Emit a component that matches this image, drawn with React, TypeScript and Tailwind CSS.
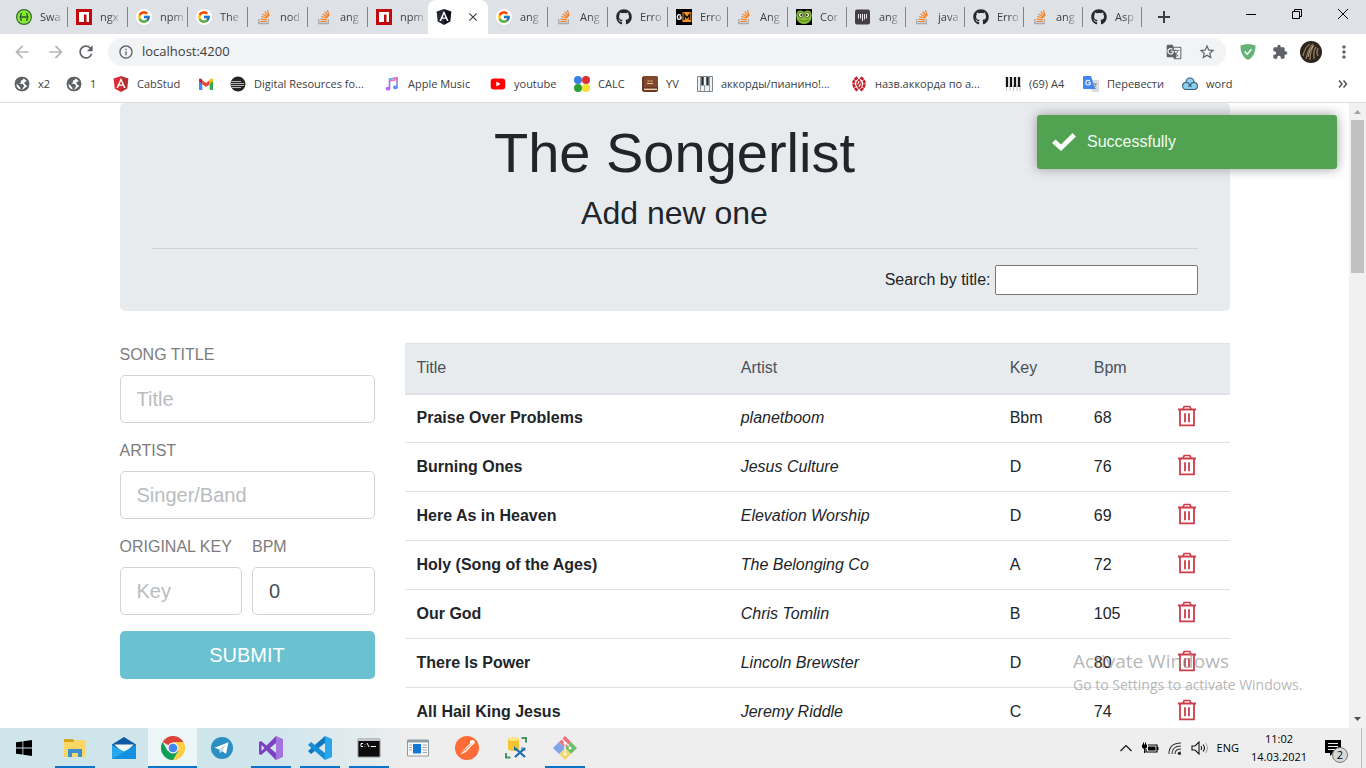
import React from 'react';
import { FcGoogle } from 'react-icons/fc';
import { FaGithub } from 'react-icons/fa';
import {
  MdArrowBack,
  MdArrowForward,
  MdClose,
  MdExtension,
  MdGTranslate,
  MdInfoOutline,
  MdMoreVert,
  MdRefresh,
  MdStarBorder,
} from 'react-icons/md';

/* ---------- Favicons ---------- */

const Swagger = () => (
  <svg viewBox="0 0 16 16" className="size-4">
    <circle cx="8" cy="8" r="7.4" fill="#85ea2d" stroke="#3a6b3c" strokeWidth="1.2" />
    <path d="M6 4.6c-1.600 0-1 1.200-1.200 2.400Q4.700 8 3.600 8q1.100 0 1.200 1c.2 1.200-.4 2.400 1.200 2.400M10 4.600c1.600 0 1 1.200 1.200 2.400q.1 1 1.200 1-1.100 0-1.200 1c-.2 1.200.4 2.400-1.200 2.400M5.500 8h5" fill="none" stroke="#2c4f2e" strokeWidth="1.300" />
  </svg>
);

const Npm = () => (
  <svg viewBox="0 0 16 16" className="size-4">
    <path fill="#c00a0c" d="M0 0h16v16H0z" />
    <path fill="#fff" d="M3 3h10v10h-2.500V5.500H8V13H3z" />
  </svg>
);

const Google = () => (
  <span className="flex size-4 items-center justify-center rounded-full bg-white">
    <FcGoogle className="size-3.5" />
  </span>
);

const Stack = () => (
  <svg viewBox="0 0 16 16" className="size-4">
    <path d="M2.700 10v4.500h9.600V10" fill="none" stroke="#a7a9ac" strokeWidth="1.300" />
    <path d="M4.300 12.500h6.300M4.500 10.100l6.200.7M5.200 7.500l6 1.700M6.600 4.900l5.300 3.300M8.700 2.700l3.900 4.800M11.400 1.200l1.800 5.500" stroke="#f48024" strokeWidth="1.200" />
  </svg>
);

const Github = () => <FaGithub className="size-4 text-[#24292e]" />;

const AngularShape = ({ left, right }: { left: string; right: string }) => (
  <svg viewBox="0 0 16 16" className="size-4">
    <path fill={left} d="M8 0 .6 2.600l1.100 9.800L8 16z" />
    <path fill={right} d="m8 0 7.400 2.600-1.100 9.800L8 16z" />
    <path fill="#fff" fillRule="evenodd" d="M8 1.800 3.400 12.100h1.700l.9-2.300h4l.9 2.300h1.700zM8 5l1.400 3.400H6.600z" />
  </svg>
);
const AngularDark = () => <AngularShape left="#252b36" right="#0d1119" />;
const AngularRed = () => <AngularShape left="#dd2c31" right="#b52e31" />;

const Gm = () => (
  <svg viewBox="0 0 16 16" className="size-4">
    <path fill="#000" d="M0 0h16v16H0z" />
    <path fill="#f7931e" d="M6.500 3h8.800v10H6.500z" />
    <path d="M5 6.300Q1.300 4.500 1.300 8T5 9.700V8H3.500" fill="none" stroke="#fff" strokeWidth="1.300" />
    <path d="M8.200 11V5.500l2.700 3.500 2.700-3.500V11" fill="none" stroke="#111" strokeWidth="1.500" />
  </svg>
);

const Frog = () => (
  <svg viewBox="0 0 16 16" className="size-4">
    <path fill="#000" d="M0 0h16v16H0z" />
    <path fill="#86bd35" d="M.5 5Q1 1.500 4.500 1.500 7 1.500 8 3q1-1.500 3.500-1.500Q15 1.500 15.500 5q.8 7-3.500 9-4 2-8 0Q-.3 12 .5 5" />
    <circle cx="4.800" cy="6" r="2.500" fill="#eef6c8" stroke="#29430d" strokeWidth=".8" />
    <circle cx="11.200" cy="6" r="2.500" fill="#eef6c8" stroke="#29430d" strokeWidth=".8" />
    <circle cx="5.300" cy="6" r="1" fill="#15240a" />
    <circle cx="10.700" cy="6" r="1" fill="#15240a" />
    <path d="M3 11q5 2.600 10 0" stroke="#558821" fill="none" />
  </svg>
);

const Bars = () => (
  <svg viewBox="0 0 16 16" className="size-4">
    <rect y=".5" width="15" height="15" rx="2" fill="#453f49" />
    <path d="M3.500 5v4.500M5.500 5v4.500M7.500 5v7M9.500 5v5.500M11.500 5v4.500" stroke="#fff" strokeWidth=".9" />
  </svg>
);

const Globe = () => (
  <svg viewBox="0 0 16 16" className="size-4">
    <circle cx="8" cy="8" r="7.300" fill="#5f6368" />
    <path fill="#fff" d="M9.500 2.200 8.800 4 7 4.600v1.600L5.200 7.500 8.700 8l1.500 1.700-1 1.800L8 14q-2-.5-1.800-2.500L4 9 2.200 7.700Q2.200 11 4.500 13L8 14.300 13.400 10l-1.700-1-1.600-2 1.500-1.500L13 5z" />
    <circle cx="8" cy="8" r="6.600" fill="none" stroke="#5f6368" strokeWidth="1.500" />
  </svg>
);

const Gmail = () => (
  <svg viewBox="0 0 16 16" className="size-4">
    <path fill="#4285f4" d="M1 3.500 4.300 6v8H1.800Q1 14 1 13z" />
    <path fill="#34a853" d="M15 3.500 11.700 6v8h2.500q.8 0 .8-1z" />
    <path fill="#ea4335" d="M4.300 4.300 8 7.100l3.700-2.800v4L8 11 4.300 8.300z" />
    <path fill="#c5221f" d="M1 5V4q.2-2 2-1.200l1.300 1v4.300z" />
    <path fill="#fbbc04" d="M15 5V4q-.2-2-2-1.200l-1.300 1v4.300z" />
  </svg>
);

const Disc = () => (
  <svg viewBox="0 0 16 16" className="size-4">
    <circle cx="8" cy="8" r="7.500" fill="#252525" />
    <path d="M1.500 5.500H11M.5 7.500H14M.5 9.500H14M1.500 11.500H11" stroke="#b5b5b5" strokeWidth="1" />
  </svg>
);

const Music = () => (
  <svg viewBox="0 0 16 16" className="size-4">
    <defs>
      <linearGradient id="note" x1="0" x2="1" y1="1" y2="0">
        <stop stopColor="#b665f3" />
        <stop offset=".5" stopColor="#47a8ef" />
        <stop offset="1" stopColor="#f265a8" />
      </linearGradient>
    </defs>
    <path d="M5.500 12V3.200L13 1.700v9" fill="none" stroke="url(#note)" strokeWidth="1.700" />
    <path d="M5.500 5 13 3.500" stroke="#ed72bc" strokeWidth="1.700" />
    <ellipse cx="4" cy="12.700" rx="2.400" ry="1.900" fill="#b56bf5" />
    <ellipse cx="11.400" cy="11.300" rx="2.400" ry="1.900" fill="#5b8df2" />
  </svg>
);

const Youtube = () => (
  <svg viewBox="0 0 16 16" className="size-4">
    <rect x=".7" y="2.500" width="14.600" height="11" rx="3" fill="#f00" />
    <path fill="#fff" d="m6.300 5.500 4.300 2.500-4.300 2.500z" />
  </svg>
);

const Dots = () => (
  <svg viewBox="0 0 16 16" className="size-4">
    <circle cx="4" cy="4" r="4" fill="#3a80e8" />
    <circle cx="12" cy="4" r="4" fill="#e02f34" />
    <circle cx="4" cy="12" r="4" fill="#26a336" />
    <circle cx="12" cy="12" r="4" fill="#f4df30" />
  </svg>
);

const Book = () => (
  <svg viewBox="0 0 16 16" className="size-4">
    <rect width="16" height="16" rx="2.500" fill="#6d3420" />
    <path fill="#834730" d="M3 0h11q2 0 2 2v9H2V1z" />
    <path d="M2 13.300h13" stroke="#ead9b9" strokeWidth="1.400" />
    <path d="M5.500 5h2m1 0h2M5 7.500h6" stroke="#e8c98a" strokeWidth="1.200" />
  </svg>
);

const Piano = () => (
  <svg viewBox="0 0 16 16" className="size-4">
    <path fill="#eef0f1" stroke="#7c868c" d="M.5.5h15v15H.5z" />
    <path d="M3.500 1v14M7.500 9v6M12.500 1v14" stroke="#8f989e" />
    <path d="M5.500 1v8.500M10.500 1v8.500" stroke="#262b2e" strokeWidth="2.400" />
  </svg>
);

const Emblem = () => (
  <svg viewBox="0 0 16 16" className="size-4">
    <path d="M6.500 1.500Q2 4 2.500 8t4 6.500M9.500 1.500Q14 4 13.500 8t-4 6.500" fill="none" stroke="#c61c27" strokeWidth="2.600" strokeDasharray="3.500 .6" />
    <path d="M8 3.500Q5.500 6 5.800 8.500L8 12.500q2.700-2 2.200-5z" fill="none" stroke="#c61c27" strokeWidth="1.200" />
    <path d="m7 10 2-4" stroke="#c61c27" strokeWidth="1.300" />
  </svg>
);

const Keys = () => (
  <svg viewBox="0 0 16 16" className="size-4">
    <path d="M1.500 9v6M5 9v6M8.500 9v6M12 9v6M15.200 9v6" stroke="#b3b3b3" strokeWidth=".8" />
    <path d="M2 1v10M6 1v10M10 1v10M14 1v10" stroke="#151515" strokeWidth="2.300" />
  </svg>
);

const Translate = () => (
  <svg viewBox="0 0 16 16" className="size-4">
    <path fill="#dadce0" d="M6 4h9q1 0 1 1v11H9z" />
    <path d="M9 8h5m-2.500-1v1m-2 5q3-1.500 3.300-5m-2.600 1.500q1 2.500 3 3.500" fill="none" stroke="#80868b" strokeWidth=".9" />
    <path fill="#4285f4" d="M1 0h7l4 13H1q-1 0-1-1V1q0-1 1-1z" />
    <path d="M7 5Q4 3 3 6t2 3 2.300-2.300H5.200" fill="none" stroke="#fff" strokeWidth="1.100" />
  </svg>
);

const Clouds = () => (
  <svg viewBox="0 0 16 16" className="size-4">
    <g fill="#8bd0f0" stroke="#345a75" strokeWidth="1.100">
      <circle cx="8" cy="6" r="4" />
      <circle cx="4.100" cy="10" r="3.500" />
      <circle cx="11.900" cy="10" r="3.500" />
    </g>
    <path d="M4.500 10h7v2.900h-7z" fill="#8bd0f0" />
    <path d="M4 13.500h8M8 9l-1.500 2M8 9l1.500 2" stroke="#345a75" strokeWidth="1.100" />
  </svg>
);

const Shield = () => (
  <svg viewBox="0 0 16 16" className="size-4">
    <path fill="#67b279" d="M8 0q4 0 7.500 1.500Q16 12 8 16 0 12 .5 1.500 4 0 8 0" />
    <path d="m4.700 7.500 2.500 2.700 4.300-4.900" stroke="#fff" strokeWidth="1.400" fill="none" />
  </svg>
);

const Avatar = () => (
  <svg viewBox="0 0 22 22" className="size-[22px]">
    <circle cx="11" cy="11" r="11" fill="#2e241c" />
    <path d="M3 15Q5 6 10 3M6 18Q8 8 13 3M10 19q0-9 4-15M14 18q-1-8 2-12M18 15q-2-4 0-8" stroke="#8f7c60" fill="none" strokeWidth="1.300" />
    <path d="M8 16q1-7 5-11" stroke="#d4c5a6" fill="none" strokeWidth=".8" />
  </svg>
);

/* ---------- Taskbar icons ---------- */

const WinLogo = () => (
  <svg viewBox="0 0 16 16" className="size-4">
    <path d="m0 2.300 6.500-.9v6.200H0zM7.300 1.300 16 0v7.600H7.300zM0 8.400h6.500v6.200L0 13.700zM7.300 8.400H16V16l-8.700-1.200z" />
  </svg>
);

const Explorer = () => (
  <svg viewBox="0 0 24 24" className="size-6">
    <path fill="#d9a520" d="M1 3h9l2 3H1z" />
    <path fill="#fdd766" d="M1 6h10l1-2h10.500v17H1z" />
    <path fill="#3e8fd0" d="M5 13h14v8h-4v-4H9v4H5z" />
  </svg>
);

const Mail = () => (
  <svg viewBox="0 0 24 24" className="size-6">
    <path fill="#0c59a4" d="M0 8.500 12 1l12 7.500v4H0z" />
    <path fill="#f3f7fa" d="M2 8.500h20L13 16h-2z" />
    <path fill="#28a8ea" d="m0 9 12 6.500L24 9v14H0z" />
    <path fill="#1490df" d="M0 23 24 9v14z" />
  </svg>
);

const Chrome = () => (
  <svg viewBox="0 0 24 24" className="size-6">
    <path fill="#db4437" d="M12 12 1.600 6a12 12 0 0 1 20.800 0z" />
    <path fill="#ffcd40" d="M12 6h10.400A12 12 0 0 1 12 24l5-9z" />
    <path fill="#0f9d58" d="M1.600 6A12 12 0 0 0 12 24l5.200-9L12 12 6.800 15z" />
    <circle cx="12" cy="12" r="5.500" fill="#f1f1f1" />
    <circle cx="12" cy="12" r="4.300" fill="#4285f4" />
  </svg>
);

const Telegram = () => (
  <svg viewBox="0 0 24 24" className="size-6">
    <circle cx="12" cy="12" r="11" fill="#2c8fc1" />
    <path fill="#fff" d="M4.500 11.800 18.500 6.200 16 18l-4-3-2 2-.6-3.500z" />
    <path fill="#b7d8eb" d="m9.400 13.500 7-5.500L12 15l-2 2z" />
  </svg>
);

const VisualStudio = () => (
  <svg viewBox="0 0 24 24" className="size-6">
    <path fill="#a374df" d="m17 0 7 3v18l-7 3z" />
    <path fill="#7c42bd" d="M17 0v7l-6 5 6 5v7L7.500 14.500 2 19l-2-1V6l2-1 5.500 4.500z" />
    <path fill="#d5e7ee" d="m2.500 9 3 3-3 3z" />
  </svg>
);

const VsCode = () => (
  <svg viewBox="0 0 24 24" className="size-6">
    <path fill="#0f78bd" d="M17 0 0 15l3 3L17 7z" />
    <path fill="#148fd5" d="M17 24 0 9l3-3 14 11z" />
    <path fill="#27a6ec" d="m17 0 7 3v18l-7 3z" />
  </svg>
);

const Terminal = () => (
  <svg viewBox="0 0 24 24" className="size-6">
    <path fill="#0b0b0b" stroke="#939393" d="M1 3h22v18H1z" />
    <path fill="#bfc6ca" d="M1 3h22v2H1z" />
    <path d="M6 7.500H4v3h2M8 8v.500M8 10v.500M10 7l2 4M14 10.500h5" stroke="#fff" fill="none" />
  </svg>
);

const Reader = () => (
  <svg viewBox="0 0 24 24" className="size-6">
    <path fill="#fafafa" stroke="#919a9e" d="M1.500 4h21v16h-21z" />
    <path fill="#8fa0a8" d="M2 4h20v2.500H2z" />
    <path fill="#1478d4" d="M7 8h8v9.500H7z" />
    <path d="M3 9h3M3 11.500h3M3 14h3M16.500 9H21M16.500 11.500H21M16.500 14H21M16.500 16.500H21" stroke="#a8a8a8" />
  </svg>
);

const Postman = () => (
  <svg viewBox="0 0 24 24" className="size-6">
    <circle cx="12" cy="12" r="12" fill="#ff6c37" />
    <path fill="#fff" d="m5.500 18.500 3.500-5L15.500 7l2 2-6.500 7z" />
    <circle cx="17.300" cy="6.500" r="2.400" fill="#fff" />
    <path d="m7.500 16.500 9-8.500M9.500 13l2 2" stroke="#ff6c37" strokeWidth=".8" />
  </svg>
);

const SqlTool = () => (
  <svg viewBox="0 0 24 24" className="size-6">
    <path fill="#f4c531" d="M4 3v10.500q6 3 11 0V3z" />
    <ellipse cx="9.500" cy="3" rx="5.500" ry="2" fill="#ffe385" />
    <path d="M17.500 2H22v4.500M2 17v4.500h4.500" fill="none" stroke="#44965a" strokeWidth="2" />
    <path d="m11 12 10 9m0-9-10 9" stroke="#176dac" strokeWidth="2.200" />
    <path d="M10.500 10.500v3.500H14M18 11v3h3.500" stroke="#176dac" fill="none" />
  </svg>
);

const GitTool = () => (
  <svg viewBox="0 0 24 24" className="size-6">
    <path fill="#ef6f72" d="m12 0 6 6-6 6-6-6z" />
    <path fill="#6fbf69" d="m18 6 6 6-6 6-6-6z" />
    <path fill="#f4d768" d="m12 12 6 6-6 6-6-6z" />
    <path fill="#7fa5e8" d="m6 6 6 6-6 6-6-6z" />
    <path d="m8 2 8 8M12 6v12" stroke="#f5f5f5" strokeWidth="1.300" />
    <circle cx="12" cy="7" r="1.500" fill="#fff" />
    <circle cx="17" cy="12" r="1.500" fill="#fff" />
    <circle cx="12" cy="18" r="1.500" fill="#fff" />
  </svg>
);

const Trash = () => (
  <svg viewBox="0 0 18 22" className="h-[22px] w-[18px]" fill="none" stroke="#cd3d4b">
    <path d="M0 4.500h18M2 5v15.300h14V5" strokeWidth="1.800" />
    <path d="M5 4.200 6.200 1.500h5.600L13 4.200" strokeWidth="1.700" />
    <path d="M7 8.300v8.900M11 8.300v8.900" strokeWidth="1.800" />
  </svg>
);

/* ---------- Data ---------- */

type Icon = () => React.JSX.Element;

const tabs: { icon: Icon; text: string; active?: boolean; narrow?: boolean }[] = [
  { icon: Swagger, text: 'Swa' },
  { icon: Npm, text: 'ngx' },
  { icon: Google, text: 'npm' },
  { icon: Google, text: 'The' },
  { icon: Stack, text: 'nod' },
  { icon: Stack, text: 'ang' },
  { icon: Npm, text: 'npm' },
  { icon: AngularDark, text: '', active: true },
  { icon: Google, text: 'ang' },
  { icon: Stack, text: 'Ang' },
  { icon: Github, text: 'Erro' },
  { icon: Gm, text: 'Erro' },
  { icon: Stack, text: 'Ang' },
  { icon: Frog, text: 'Cor', narrow: true },
  { icon: Bars, text: 'ang', narrow: true },
  { icon: Stack, text: 'java', narrow: true },
  { icon: Github, text: 'Erro', narrow: true },
  { icon: Stack, text: 'ang', narrow: true },
  { icon: Github, text: 'Asp', narrow: true },
];

const bookmarks: { icon: Icon; text: string; width: string }[] = [
  { icon: Globe, text: 'x2', width: 'w-[52px]' },
  { icon: Globe, text: '1', width: 'w-[47px]' },
  { icon: AngularRed, text: 'CabStud', width: 'w-[85px]' },
  { icon: Gmail, text: '', width: 'w-[32px]' },
  { icon: Disc, text: 'Digital Resources fo...', width: 'w-[154px]' },
  { icon: Music, text: 'Apple Music', width: 'w-[106px]' },
  { icon: Youtube, text: 'youtube', width: 'w-[84px]' },
  { icon: Dots, text: 'CALC', width: 'w-[68px]' },
  { icon: Book, text: 'YV', width: 'w-[55px]' },
  { icon: Piano, text: 'аккорды/пианино!...', width: 'w-[154px]' },
  { icon: Emblem, text: 'назв.аккорда по а...', width: 'w-[154px]' },
  { icon: Keys, text: '(69) A4', width: 'w-[78px]' },
  { icon: Translate, text: 'Перевести', width: 'w-[99px]' },
  { icon: Clouds, text: 'word', width: 'w-[60px]' },
];

const songs = [
  ['Praise Over Problems', 'planetboom', 'Bbm', '68'],
  ['Burning Ones', 'Jesus Culture', 'D', '76'],
  ['Here As in Heaven', 'Elevation Worship', 'D', '69'],
  ['Holy (Song of the Ages)', 'The Belonging Co', 'A', '72'],
  ['Our God', 'Chris Tomlin', 'B', '105'],
  ['There Is Power', 'Lincoln Brewster', 'D', '80'],
  ['All Hail King Jesus', 'Jeremy Riddle', 'C', '74'],
];

const apps: { name: string; icon: Icon; running?: boolean; active?: boolean }[] = [
  { name: 'File Explorer', icon: Explorer, running: true },
  { name: 'Mail', icon: Mail },
  { name: 'Chrome', icon: Chrome, active: true },
  { name: 'Telegram', icon: Telegram },
  { name: 'Visual Studio', icon: VisualStudio, running: true },
  { name: 'Visual Studio Code', icon: VsCode, running: true },
  { name: 'Command Prompt', icon: Terminal, running: true },
  { name: 'Reader', icon: Reader },
  { name: 'Postman', icon: Postman },
  { name: 'SQL tools', icon: SqlTool },
  { name: 'Git', icon: GitTool, running: true },
];

/* ---------- Browser chrome ---------- */

function TabStrip() {
  return (
    <div className="flex h-[34px] shrink-0 bg-[#dee1e6] pl-2">
      <div className="flex min-w-0">
        {tabs.map(({ icon: TabIcon, text, active, narrow }, i) => (
          <div
            key={i}
            className={
              active
                ? 'flex w-[60px] items-center gap-3.5 rounded-t-lg bg-white pl-2'
                : narrow
                  ? 'flex w-[59px] items-center pl-2'
                  : 'flex w-[60px] items-center pl-2'
            }
          >
            <span className="shrink-0"><TabIcon /></span>
            {active ? (
              <button aria-label="Close tab" className="text-[#3c4043]">
                <MdClose className="size-3.5" />
              </button>
            ) : (
              <>
                <span className="ml-2 whitespace-nowrap text-[11px] text-[#3c4043] [mask-image:linear-gradient(to_right,black_50%,#0004)]">
                  {text}
                </span>
                {i !== 6 && <span className="ml-auto h-5 w-px shrink-0 bg-[#808388]" />}
              </>
            )}
          </div>
        ))}
      </div>
      <button aria-label="New tab" className="ml-4 text-[#3c4043]">
        <svg viewBox="0 0 12 12" className="size-3"><path d="M6 0v12M0 6h12" stroke="currentColor" strokeWidth="2" /></svg>
      </button>
      <div className="ml-auto flex h-7">
        <button aria-label="Minimize" className="flex w-[46px] items-center justify-center">
          <svg viewBox="0 0 10 10" className="size-2.5"><path d="M0 5.500h10" stroke="#000" /></svg>
        </button>
        <button aria-label="Restore" className="flex w-[46px] items-center justify-center">
          <svg viewBox="0 0 10 10" className="size-2.5"><path d="M.5 2.500h7v7h-7zM2.500 2V.5h7v7H8" fill="none" stroke="#000" /></svg>
        </button>
        <button aria-label="Close" className="flex w-[46px] items-center justify-center">
          <svg viewBox="0 0 10 10" className="size-2.5"><path d="m0 0 10 10M10 0 0 10" stroke="#000" /></svg>
        </button>
      </div>
    </div>
  );
}

function Toolbar() {
  return (
    <div className="flex h-9 shrink-0 items-center bg-white pr-3">
      <div className="flex w-[108px] items-center gap-3.5 pl-3 text-[#b4b6b9]">
        <button aria-label="Back"><MdArrowBack className="size-5" /></button>
        <button aria-label="Forward"><MdArrowForward className="size-5" /></button>
        <button aria-label="Reload" className="-ml-1 text-[#5f6368]"><MdRefresh className="size-5" /></button>
      </div>
      <div className="flex h-7 grow items-center rounded-full bg-[#f1f3f4] px-2.5 text-[#5f6368]">
        <MdInfoOutline className="size-4" />
        <input aria-label="Address" defaultValue="localhost:4200" className="ml-2 min-w-0 grow bg-transparent text-[13px] text-[#3c4043] outline-none" />
        <button aria-label="Translate page"><MdGTranslate className="size-4" /></button>
        <button aria-label="Bookmark" className="ml-4"><MdStarBorder className="size-[18px]" /></button>
      </div>
      <div className="flex items-center gap-3 pl-[14px] text-[#5f6368]">
        <button aria-label="Ad blocker"><Shield /></button>
        <button aria-label="Extensions" className="ml-1"><MdExtension className="size-4" /></button>
        <button aria-label="Profile"><Avatar /></button>
        <button aria-label="Menu"><MdMoreVert className="size-5" /></button>
      </div>
    </div>
  );
}

function Bookmarks() {
  return (
    <nav className="flex h-[33px] shrink-0 items-center border-b border-[#dadce0] bg-white pb-1 pl-[14px] pr-[18px]">
      {bookmarks.map(({ icon: MarkIcon, text, width }, i) => (
        <a key={i} href="#" aria-label={text || 'Gmail'} className={`flex shrink-0 items-center gap-2 whitespace-nowrap text-[11px] text-[#3c4043] ${width}`}>
          <span className="shrink-0"><MarkIcon /></span>
          {text}
        </a>
      ))}
      <button aria-label="More bookmarks" className="ml-auto">
        <svg viewBox="0 0 10 10" className="size-2.5"><path d="m1 1.500 3 3.500-3 3.500M5.500 1.500l3 3.500-3 3.500" fill="none" stroke="#4a4d51" strokeWidth="1.400" /></svg>
      </button>
    </nav>
  );
}

/* ---------- Page ---------- */

const fieldClass =
  'h-12 w-full rounded-[5px] border border-[#ced4da] bg-white px-4 text-xl text-[#495057] placeholder:text-[#b9bcbf] outline-none';

function Field({ id, label, placeholder, value }: { id: string; label: string; placeholder?: string; value?: string }) {
  return (
    <div className="min-w-0">
      <label htmlFor={id} className="mb-2 block whitespace-nowrap uppercase text-[#7c7c7c]">{label}</label>
      <input id={id} placeholder={placeholder} defaultValue={value} className={fieldClass} />
    </div>
  );
}

function SongForm() {
  return (
    <form className="flex w-[255px] shrink-0 flex-col gap-4">
      <Field id="title" label="Song title" placeholder="Title" />
      <Field id="artist" label="Artist" placeholder="Singer/Band" />
      <div className="grid grid-cols-2 gap-2.5">
        <Field id="key" label="Original key" placeholder="Key" />
        <Field id="bpm" label="Bpm" value="0" />
      </div>
      <button type="button" className="h-12 rounded-[5px] bg-[#6ac2d0] text-xl text-white">SUBMIT</button>
    </form>
  );
}

function SongTable() {
  return (
    <table className="min-w-0 grow table-fixed border-collapse self-start text-left">
      <colgroup>
        <col className="w-[39.3%]" />
        <col className="w-[32.600%]" />
        <col className="w-[10.200%]" />
        <col className="w-[10.200%]" />
        <col />
      </colgroup>
      <thead>
        <tr className="h-[50px] border-t border-b-2 border-[#dee2e6] bg-[#e8ebee] text-[#495057]">
          {['Title', 'Artist', 'Key', 'Bpm', ''].map((name) => (
            <th key={name} className="px-3 font-normal">{name}</th>
          ))}
        </tr>
      </thead>
      <tbody>
        {songs.map(([title, artist, key, bpm]) => (
          <tr key={title} className="h-[49px] border-b border-[#dee2e6]">
            <td className="px-3 font-bold">{title}</td>
            <td className="px-3 italic">{artist}</td>
            <td className="px-3">{key}</td>
            <td className="px-3">{bpm}</td>
            <td className="px-3 pb-1">
              <button aria-label={`Delete ${title}`} className="block"><Trash /></button>
            </td>
          </tr>
        ))}
      </tbody>
    </table>
  );
}

function Page() {
  return (
    <div className="flex min-h-0 grow">
      <main className="relative min-w-0 grow overflow-hidden bg-white font-['Liberation_Sans',Arial,sans-serif] text-base text-[#212529]">
        <div className="mx-auto max-w-[1140px] px-[15px]">
          <header className="mb-8 rounded-[5px] bg-[#e8ebee] px-8 py-4 text-center">
            <h1 className="mb-2 text-[56px] leading-[67px]">The Songerlist</h1>
            <h2 className="mb-4 text-[32px] leading-[38px]">Add new one</h2>
            <div className="flex items-center justify-end gap-1 border-t border-[#cfd2d5] pt-4">
              <label htmlFor="search">Search by title:</label>
              <input id="search" className="h-[30px] w-[203px] rounded-xs border border-[#767676] bg-white px-1" />
            </div>
          </header>
          <div className="flex gap-[30px]">
            <SongForm />
            <SongTable />
          </div>
        </div>
        <div role="status" className="absolute right-3 top-3 flex h-[54px] w-[300px] items-center rounded-[3px] bg-[#51a351] pl-[15px] text-[#f4faf4] shadow-[0_0_12px_#999999]">
          <svg viewBox="0 0 24 18" className="mr-[11px] h-[18px] w-6">
            <path fill="#fff" d="m0 10 3.500-3.500L9 11.500 20.500 0 24 3.500 9 18z" />
          </svg>
          Successfully
        </div>
        <div className="pointer-events-none absolute bottom-8 right-10 w-[236px] whitespace-nowrap font-['Open_Sans','Noto_Sans',sans-serif] text-[#8c8c8c]/65">
          <div className="text-[19px] leading-[26px]">Activate Windows</div>
          <div className="text-sm leading-[22px]">Go to Settings to activate Windows.</div>
        </div>
      </main>
      <div className="flex w-[17px] shrink-0 flex-col items-center bg-[#f1f1f1]">
        <svg viewBox="0 0 17 17" className="size-[17px] shrink-0"><path d="m5 11 3.500-4 3.500 4z" fill="#a3a3a3" /></svg>
        <div className="h-[153px] w-[13px] bg-[#c1c1c1]" />
        <svg viewBox="0 0 17 17" className="mt-auto size-[17px] shrink-0"><path d="m5 6 3.500 4L12 6z" fill="#505050" /></svg>
      </div>
    </div>
  );
}

/* ---------- Taskbar ---------- */

function Taskbar() {
  return (
    <footer className="flex h-10 shrink-0 bg-linear-to-r from-[#cfe5ec] from-20% to-[#eeeeee] to-30% text-xs text-black">
      <button aria-label="Start" className="flex w-[50px] items-center justify-center pr-0.5"><WinLogo /></button>
      {apps.map(({ name, icon: AppIcon, running, active }) => (
        <button
          key={name}
          aria-label={name}
          className={
            active
              ? 'flex w-[49px] flex-col items-center border-b-2 border-[#0a74cb] bg-white/60 pt-2'
              : 'flex w-[49px] flex-col items-center pt-2'
          }
        >
          <AppIcon />
          {running && <span className="mt-auto h-0.5 w-10 bg-[#0a74cb]" />}
        </button>
      ))}
      <div className="ml-auto flex items-center">
        <button aria-label="Hidden icons" className="mr-2">
          <svg viewBox="0 0 14 14" className="size-3.5"><path d="m1.500 10 5.500-5.500 5.500 5.500" fill="none" stroke="#111" strokeWidth="1.200" /></svg>
        </button>
        <svg viewBox="0 0 18 16" className="mr-2 h-4 w-[18px]">
          <path d="M7 5h9v7H5V9" fill="none" stroke="#000" strokeWidth="1.200" />
          <path d="M7 6.500h7.500v4H7zM16 7h1.500v3H16zM1 4.500h5v3L4 9H3L1 7.500zM2 2.500h1v2H2zM4 2.500h1v2H4zM3 9h1v4H3z" />
        </svg>
        <svg viewBox="0 0 16 16" className="mr-2 size-4" fill="none" stroke="#333" strokeWidth="1.100">
          <path d="M2 14Q2 3 14 3M5 14q0-8 9-8M8 14q0-5 6-5M11 14q0-2 3-2" />
          <circle cx="12.500" cy="13.500" r="1" fill="#000" />
        </svg>
        <svg viewBox="0 0 18 16" className="mr-2 h-4 w-[18px]" fill="none" stroke="#111" strokeWidth="1.100">
          <path d="M1 6h3l4-4v12l-4-4H1z" />
          <path d="M10 6q1.500 2 0 4M12 4.500q3 3.500 0 7" />
          <path d="M14.500 3q4 5 0 10" stroke="#aaa" />
        </svg>
        <span className="text-[11px]">ENG</span>
        <time className="mx-3 flex w-[56px] flex-col items-center text-[11px] leading-[18px]">
          <span>11:02</span>
          <span>14.03.2021</span>
        </time>
        <button aria-label="Notifications" className="relative ml-1.5 mr-5 size-4">
          <svg viewBox="0 0 16 16" className="size-4">
            <path d="M0 0h16v13H8l-3 3v-3H0z" />
            <path d="M3 3.500h10M3 6.500h10M3 9.500h7" stroke="#eee" />
          </svg>
          <span className="absolute left-[7px] top-[7px] flex size-4 items-center justify-center rounded-full border border-[#777] bg-[#d8d8d8] text-[11px]">2</span>
        </button>
      </div>
      <div className="mr-1 w-px bg-[#bdbdbd]" />
    </footer>
  );
}

export default function App() {
  return (
    <div className="flex h-screen flex-col overflow-hidden font-['Open_Sans','Noto_Sans',sans-serif]">
      <TabStrip />
      <Toolbar />
      <Bookmarks />
      <Page />
      <Taskbar />
    </div>
  );
}
